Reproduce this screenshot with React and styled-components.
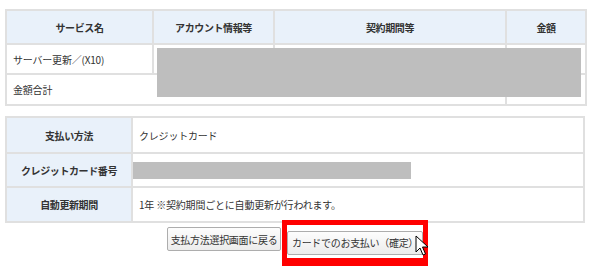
import React from "react";
import styled, { createGlobalStyle } from "styled-components";

const GlobalStyle = createGlobalStyle`
  html, body {
    margin: 0;
    padding: 0;
    background: #fff;
  }
  body {
    font-family: "Noto Sans CJK JP", "Liberation Sans", sans-serif;
    color: #333;
  }
`;

const Page = styled.div`
  width: 600px;
  height: 266px;
  overflow: hidden;
  padding: 9px 15px 0 5px;
  box-sizing: border-box;
`;

const TableWrap = styled.div`
  position: relative;
  margin-bottom: 10px;
`;

const Table = styled.table`
  width: 580px;
  border-collapse: collapse;
  table-layout: fixed;
  border: 2px solid #e0e0e0;
  font-size: 10px;
`;

const Th = styled.th`
  background: #e9f1fa;
  border: 2px solid #e0e0e0;
  font-weight: bold;
  letter-spacing: -0.4px;
  text-align: center;
  padding: 0;
  height: ${(p) => p.$h || 28}px;
  color: #333;
`;

const Td = styled.td`
  border: 2px solid #e0e0e0;
  padding: 0 6px;
  height: ${(p) => p.$h || 28}px;
  text-align: ${(p) => p.$align || "left"};
  white-space: nowrap;
  letter-spacing: -0.2px;
`;

const Redact = styled.div`
  position: absolute;
  left: 152px;
  top: 39px;
  width: 424px;
  height: 49px;
  background: #bebebe;
`;

const Bar = styled.div`
  margin-left: -6px;
  width: 278px;
  height: 17px;
  background: #bebebe;
`;

const Actions = styled.div`
  display: flex;
  align-items: flex-start;
  justify-content: center;
  gap: 1px;
  padding-left: 5px;
  margin-top: -13px;
`;

const Button = styled.button`
  font-family: "Noto Sans CJK JP", "Liberation Sans", sans-serif;
  font-size: 10px;
  letter-spacing: -0.3px;
  white-space: nowrap;
  color: #333;
  height: 24px;
  padding: 0 2px;
  border: 1px solid #adadad;
  border-radius: 2px;
  background: linear-gradient(#fdfdfd, #ececec);
  margin-top: ${(p) => p.$mt || 0}px;
  width: ${(p) => p.$w}px;
`;

const Highlight = styled.div`
  position: relative;
  border: 5px solid #ff0000;
  border-bottom-width: 10px;
  padding: 3px 0 3px;
`;

const Cursor = styled.svg`
  position: absolute;
  right: -6px;
  top: 10px;
`;

export default function App() {
  return (
    <>
      <GlobalStyle />
      <Page>
        <TableWrap>
          <Table>
            <colgroup>
              <col style={{ width: 147 }} />
              <col style={{ width: 121 }} />
              <col style={{ width: 232 }} />
              <col style={{ width: 80 }} />
            </colgroup>
            <thead>
              <tr>
                <Th $h={32}>サービス名</Th>
                <Th $h={32}>アカウント情報等</Th>
                <Th $h={32}>契約期間等</Th>
                <Th $h={32}>金額</Th>
              </tr>
            </thead>
            <tbody>
              <tr>
                <Td $h={28}>サーバー更新／(X10)</Td>
                <Td></Td>
                <Td></Td>
                <Td></Td>
              </tr>
              <tr>
                <Td $h={29} colSpan={3}>金額合計</Td>
                <Td></Td>
              </tr>
            </tbody>
          </Table>
          <Redact />
        </TableWrap>

        <TableWrap>
          <Table>
            <colgroup>
              <col style={{ width: 126 }} />
              <col />
            </colgroup>
            <tbody>
              <tr>
                <Th $h={34}>支払い方法</Th>
                <Td $h={34}>クレジットカード</Td>
              </tr>
              <tr>
                <Th $h={32}>クレジットカード番号</Th>
                <Td $h={32}>
                  <Bar />
                </Td>
              </tr>
              <tr>
                <Th $h={33}>自動更新期間</Th>
                <Td $h={33}>1年 ※契約期間ごとに自動更新が行われます。</Td>
              </tr>
            </tbody>
          </Table>
        </TableWrap>

        <Actions>
          <Button $mt={7} $w={114}>支払方法選択画面に戻る</Button>
          <Highlight>
            <Button $w={136}>カードでのお支払い（確定）</Button>
            <Cursor width="14" height="22" viewBox="0 0 14 22">
              <path
                d="M1 1 L1 17 L5 13 L8 20 L10.5 19 L7.5 12 L13 12 Z"
                fill="#fff"
                stroke="#000"
                strokeWidth="1"
                strokeLinejoin="round"
              />
            </Cursor>
          </Highlight>
        </Actions>
      </Page>
    </>
  );
}
